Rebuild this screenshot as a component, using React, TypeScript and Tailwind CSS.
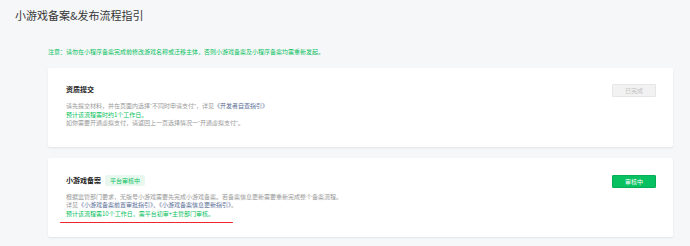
export default function App() {
  const font = { fontFamily: '"Noto Sans CJK SC", "Noto Sans", sans-serif' };
  const q = "font-['Liberation_Sans',sans-serif]";
  return (
    <div style={font} className="w-[690px] h-[246px] bg-[#f6f7f9] overflow-hidden">
      <div className="pl-[15px] pt-[9px] text-[11px] leading-[12px] text-[#353535]">
        小游戏备案&amp;发布流程指引
      </div>
      <div className="pl-[48px] mt-[27px] text-[6px] leading-[8px] text-[#07c160]">
        注意：请勿在小程序备案完成前修改游戏名称或迁移主体，否则小游戏备案及小程序备案均需重新发起。
      </div>

      <div className="ml-[48px] mt-[12px] w-[625px] bg-white rounded-[2px] shadow-[0_1px_2px_rgba(0,0,0,0.08)] pl-[18px] pr-[17px] pt-[16px] pb-[19px]">
        <div className="flex items-start justify-between">
          <div className="text-[7px] leading-[10px] font-bold text-[#222]">资质提交</div>
          <div className="w-[44px] h-[13px] flex items-center justify-center bg-[#f2f2f2] border border-[#e6e6e6] rounded-[1px] text-[6px] text-[#c2c2c2]">
            已完成
          </div>
        </div>
        <div className="mt-[5px] text-[6px] leading-[8.5px] text-[#999]">
          <div>
            请先提交材料，并在页面内选择<span className={q}>“</span>不同时申请支付<span className={q}>”</span>，详见<span className="text-[#576b95]">《开发者自查指引》</span>
          </div>
          <div className="text-[#07c160]">预计该流程需时约1个工作日。</div>
          <div>
            如你需要开通虚拟支付，请返回上一页选择情况一<span className={q}>“</span>开通虚拟支付<span className={q}>”</span>。
          </div>
        </div>
      </div>

      <div className="relative ml-[48px] mt-[11px] w-[625px] bg-white rounded-[2px] shadow-[0_1px_2px_rgba(0,0,0,0.08)] pl-[18px] pr-[17px] pt-[17px] pb-[19px]">
        <div className="flex items-start justify-between">
          <div className="flex items-start gap-[4px]">
            <div className="text-[7px] leading-[11px] font-bold text-[#222]">小游戏备案</div>
            <div className="h-[11px] px-[5px] flex items-center bg-[#e8f8ee] rounded-[2px] text-[6px] text-[#07c160]">
              平台审核中
            </div>
          </div>
          <div className="w-[44px] h-[13px] flex items-center justify-center bg-[#07c160] border border-[#06ad56] rounded-[1px] text-[6px] text-white">
            审核中
          </div>
        </div>
        <div className="mt-[5px] text-[6px] leading-[8.5px] text-[#999]">
          <div>根据监管部门要求，无版号小游戏需要先完成小游戏备案。若备案信息更新需要重新完成整个备案流程。</div>
          <div>
            详见<span className="text-[#576b95]">《小游戏备案前置审批指引》、《小游戏备案信息更新指引》</span>。
          </div>
          <div className="text-[#07c160]">预计该流程需10个工作日，需平台初审+主管部门审核。</div>
        </div>
        <div className="absolute left-[12px] top-[64px] w-[173px] h-[1.5px] bg-[#f0262e] rounded-full"></div>
      </div>
    </div>
  );
}
